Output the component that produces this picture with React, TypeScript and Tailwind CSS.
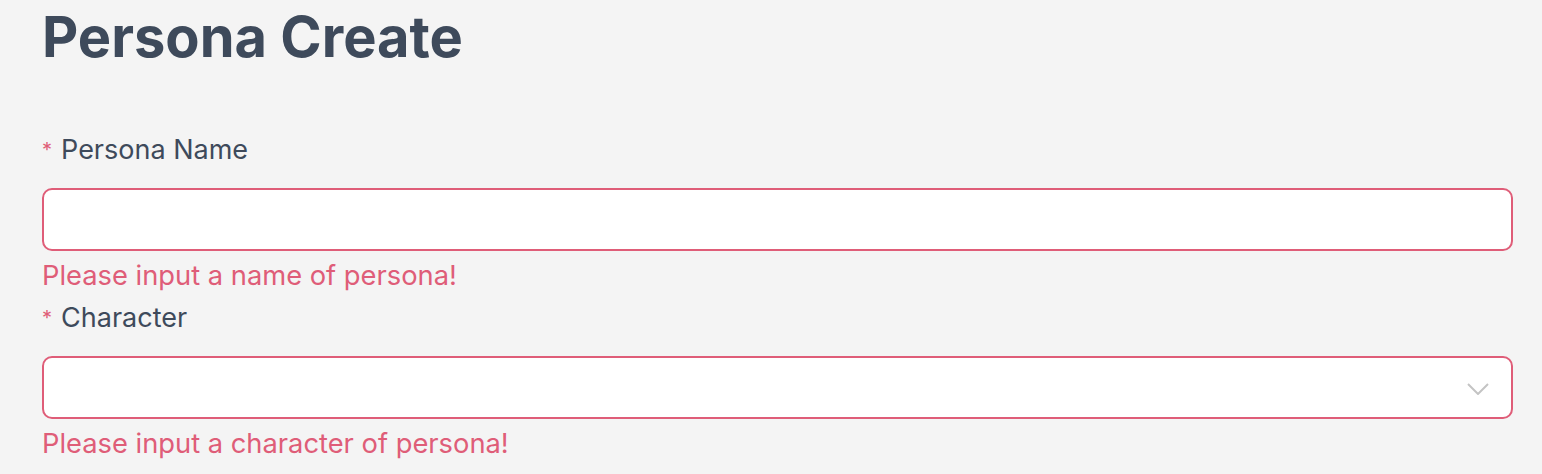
const Chevron = () => (
  <svg
    className="absolute right-[22px] top-[25px]"
    width="22"
    height="12"
    viewBox="0 0 22 12"
    fill="none"
    stroke="#c4c4c4"
    strokeWidth="2"
  >
    <polyline points="1,1 11,11 21,1" />
  </svg>
);

const Field = ({ label, error, select }: { label: string; error: string; select?: boolean }) => (
  <div className="flex flex-col mb-[7px]">
    <label className="text-[27px] leading-[36px] text-[#3e4a5b]">
      <span className="text-[#df5d78] mr-[9px] text-[20px] align-top">*</span>
      {label}
    </label>
    <div className="mt-[20px] relative h-[63px] bg-white border-2 border-[#df5d78] rounded-[10px]">
      {select && <Chevron />}
    </div>
    <div className="mt-[8px] text-[27.3px] leading-[34px] text-[#df5d78]">{error}</div>
  </div>
);

const App = () => {
  return (
    <div
      className="min-h-[474px] bg-[#f4f4f4] px-[42px] pr-[29px]"
      style={{ fontFamily: "Inter, 'Noto Sans', sans-serif" }}
    >
      <h1 className="text-[56px] font-bold leading-[72px] text-[#3e4a5b] pt-[1px]">Persona Create</h1>
      <div className="mt-[59px] flex flex-col">
        <Field label="Persona Name" error="Please input a name of persona!" />
        <Field label="Character" error="Please input a character of persona!" select />
      </div>
    </div>
  );
};

export default App;
